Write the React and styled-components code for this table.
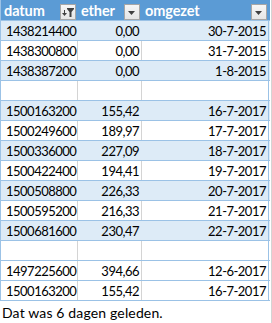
import React from "react";
import styled, { createGlobalStyle } from "styled-components";

const GlobalStyle = createGlobalStyle`
  html, body {
    margin: 0;
    padding: 0;
    background: #ffffff;
  }
  body {
    font-family: Lato, "Open Sans", sans-serif;
    font-size: 13px;
    color: #000000;
  }
`;

const Sheet = styled.div`
  width: 272px;
  height: 323px;
  overflow: hidden;
  background: #ffffff;
  border-right: 1px solid #d4d4d4;
  box-sizing: border-box;
`;

const Table = styled.div`
  width: 270px;
  display: flex;
  flex-direction: column;
  border-left: 1px solid #9bc2e6;
  box-sizing: border-box;
`;

const Row = styled.div`
  display: grid;
  grid-template-columns: 77px 64px 127px;
  height: ${(p) => (p.$header ? 21 : 20)}px;
  box-sizing: border-box;
  border-bottom: 1px solid #9bc2e6;
  background: ${(p) =>
    p.$header ? "#5b9bd5" : p.$band ? "#ddebf7" : "#ffffff"};
`;

const Cell = styled.div`
  display: flex;
  align-items: center;
  justify-content: ${(p) => (p.$right ? "flex-end" : "flex-start")};
  padding: ${(p) => (p.$right ? "0 2px 0 0" : "0 0 0 5px")};
  box-sizing: border-box;
  border-right: 1px solid
    ${(p) => (p.$last ? "#9bc2e6" : p.$band ? "#ddebf7" : "#d4d4d4")};
  letter-spacing: -0.5px;
  white-space: nowrap;
`;

const HeadCell = styled.div`
  display: flex;
  align-items: center;
  justify-content: space-between;
  padding: 0 1px 0 3px;
  box-sizing: border-box;
  border-right: 1px solid #5b9bd5;
  color: #ffffff;
  font-weight: 700;
  font-size: 14.5px;
  letter-spacing: -0.1px;
`;

const FilterButton = styled.div`
  width: 16px;
  height: 16px;
  margin-top: 3px;
  box-sizing: border-box;
  border: 1px solid #a6a6a6;
  background: linear-gradient(#f6f6f6, #e6e6e6);
  display: flex;
  align-items: center;
  justify-content: center;
`;

const Note = styled.div`
  height: 22px;
  display: flex;
  align-items: center;
  padding-left: 2px;
  font-size: 14px;
  letter-spacing: 0.15px;
`;

const DropIcon = () => (
  <svg width="14" height="14" viewBox="0 0 14 14">
    <polygon points="3,6 10,6 6.5,10" fill="#404040" />
  </svg>
);

const FilteredIcon = () => (
  <svg width="14" height="14" viewBox="0 0 14 14">
    <polygon points="1,8 6,8 3.5,11" fill="#404040" />
    <rect x="3" y="5" width="1" height="4" fill="#404040" />
    <polygon points="6,3 13,3 13,4 10.5,7 10.5,12 8.5,12 8.5,7 6,4" fill="#404040" />
  </svg>
);

const rows = [
  { t: "1438214400", e: "0,00", d: "30-7-2015", band: true },
  { t: "1438300800", e: "0,00", d: "31-7-2015" },
  { t: "1438387200", e: "0,00", d: "1-8-2015", band: true },
  { t: "", e: "", d: "" },
  { t: "1500163200", e: "155,42", d: "16-7-2017", band: true },
  { t: "1500249600", e: "189,97", d: "17-7-2017" },
  { t: "1500336000", e: "227,09", d: "18-7-2017", band: true },
  { t: "1500422400", e: "194,41", d: "19-7-2017" },
  { t: "1500508800", e: "226,33", d: "20-7-2017", band: true },
  { t: "1500595200", e: "216,33", d: "21-7-2017" },
  { t: "1500681600", e: "230,47", d: "22-7-2017", band: true },
  { t: "", e: "", d: "" },
  { t: "1497225600", e: "394,66", d: "12-6-2017" },
  { t: "1500163200", e: "155,42", d: "16-7-2017" },
];

const App = () => {
  return (
    <>
      <GlobalStyle />
      <Sheet>
        <Table>
          <Row $header>
            <HeadCell>
              datum
              <FilterButton>
                <FilteredIcon />
              </FilterButton>
            </HeadCell>
            <HeadCell>
              ether
              <FilterButton>
                <DropIcon />
              </FilterButton>
            </HeadCell>
            <HeadCell $last>
              omgezet
              <FilterButton>
                <DropIcon />
              </FilterButton>
            </HeadCell>
          </Row>
          {rows.map((r, i) => (
            <Row key={i} $band={r.band}>
              <Cell $band={r.band}>{r.t}</Cell>
              <Cell $band={r.band} $right>
                {r.e}
              </Cell>
              <Cell $band={r.band} $right $last>
                {r.d}
              </Cell>
            </Row>
          ))}
        </Table>
        <Note>Dat was 6 dagen geleden.</Note>
      </Sheet>
    </>
  );
};

export default App;
